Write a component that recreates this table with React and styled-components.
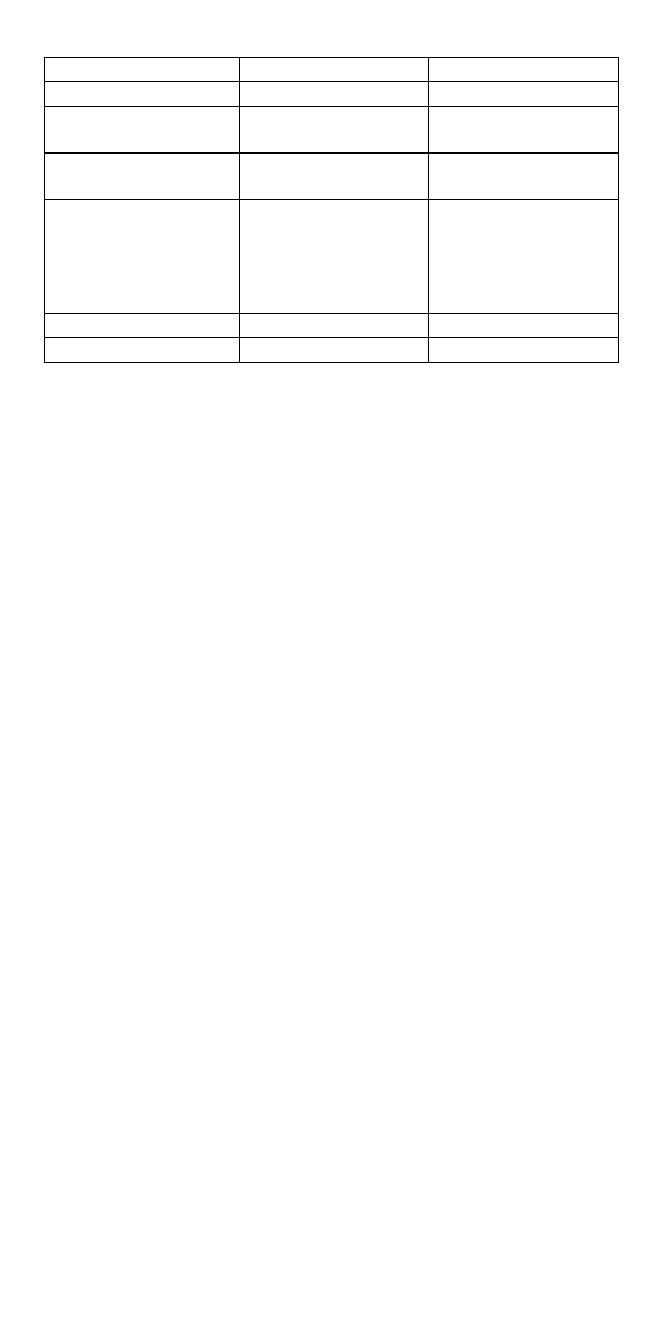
import styled, { createGlobalStyle } from 'styled-components'

const GlobalStyle = createGlobalStyle`
  html, body {
    margin: 0;
    padding: 0;
    background: #fff;
    font-family: 'Liberation Sans', Arial, sans-serif;
  }
`

const Page = styled.div`
  padding: 57px 0 0 44px;
  min-height: 1336px;
  box-sizing: border-box;
`

const Table = styled.table`
  border-collapse: collapse;
  table-layout: fixed;
  width: 574px;
`

const Row = styled.tr`
  height: ${(p) => p.$h}px;
`

const Cell = styled.td`
  border: 1px solid #000;
  border-bottom-width: ${(p) => (p.$thick ? 2 : 1)}px;
  padding: 0;
`

const rows = [
  { h: 24 },
  { h: 25 },
  { h: 46, thick: true },
  { h: 47 },
  { h: 114 },
  { h: 24 },
  { h: 25 },
]

function App() {
  return (
    <>
      <GlobalStyle />
      <Page>
        <Table>
          <colgroup>
            <col style={{ width: 195 }} />
            <col style={{ width: 189 }} />
            <col style={{ width: 190 }} />
          </colgroup>
          <tbody>
            {rows.map((r, i) => (
              <Row key={i} $h={r.h}>
                <Cell $thick={r.thick} />
                <Cell $thick={r.thick} />
                <Cell $thick={r.thick} />
              </Row>
            ))}
          </tbody>
        </Table>
      </Page>
    </>
  )
}

export default App
